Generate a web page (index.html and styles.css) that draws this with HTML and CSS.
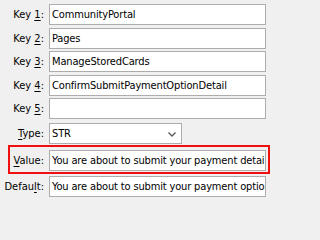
FILE: index.html
```html
<!DOCTYPE html>
<html>
<head>
<meta charset="utf-8">
<link rel="stylesheet" href="styles.css">
</head>
<body>
<div class="form">
  <div class="row">
    <span class="lbl">Key <u>1</u>:</span>
    <div class="field">CommunityPortal</div>
  </div>
  <div class="row gap3">
    <span class="lbl">Key <u>2</u>:</span>
    <div class="field">Pages</div>
  </div>
  <div class="row gap2">
    <span class="lbl">Key <u>3</u>:</span>
    <div class="field">ManageStoredCards</div>
  </div>
  <div class="row gap3">
    <span class="lbl">Key <u>4</u>:</span>
    <div class="field">ConfirmSubmitPaymentOptionDetail</div>
  </div>
  <div class="row gap2">
    <span class="lbl">Key <u>5</u>:</span>
    <div class="field"></div>
  </div>
  <div class="row gap4">
    <span class="lbl"><u>T</u>ype:</span>
    <div class="combo">
      <span class="combo-text">STR</span>
      <svg class="chev" width="8" height="5" viewBox="0 0 8 5"><path d="M0.5 0.5 L4 4 L7.5 0.5" fill="none" stroke="#5a5a5a" stroke-width="1.4"/></svg>
    </div>
  </div>
  <div class="row gap6 highlighted">
    <span class="lbl"><u>V</u>alue:</span>
    <div class="field">You are about to submit your payment details</div>
  </div>
  <div class="row gap5">
    <span class="lbl">Defau<u>l</u>t:</span>
    <div class="field">You are about to submit your payment options</div>
  </div>
</div>
</body>
</html>
```

FILE: styles.css
```css
html, body {
  margin: 0;
  padding: 0;
  background: #f0f0f0;
}
body {
  width: 271px;
  height: 202px;
  overflow: hidden;
  font-family: "DejaVu Sans Condensed", "DejaVu Sans", sans-serif;
  font-stretch: condensed;
  font-size: 11px;
  color: #000;
}
.form {
  display: flex;
  flex-direction: column;
  padding-top: 4px;
}
.row {
  display: grid;
  grid-template-columns: 44px 217px;
  column-gap: 5px;
  align-items: center;
  height: 21px;
}
.gap2 { margin-top: 2px; }
.gap3 { margin-top: 3px; }
.gap4 { margin-top: 4px; }
.gap5 { margin-top: 5px; }
.gap6 { margin-top: 6px; }
.lbl {
  text-align: right;
  white-space: nowrap;
}
.lbl u {
  text-decoration-thickness: 1px;
  text-underline-offset: 2px;
}
.field {
  box-sizing: border-box;
  height: 21px;
  border: 1px solid #adadad;
  background: #fff;
  padding: 0 2px;
  line-height: 19px;
  white-space: nowrap;
  overflow: hidden;
  letter-spacing: -0.15px;
  color: #000;
}
.combo {
  box-sizing: border-box;
  width: 133px;
  height: 21px;
  border: 1px solid #adadad;
  background: #fff;
  display: flex;
  align-items: center;
  justify-content: space-between;
  padding: 0 5px 0 2px;
  letter-spacing: -0.15px;
}
.chev {
  display: block;
  margin-top: 1px;
}
.highlighted {
  position: relative;
}
.highlighted::after {
  content: "";
  position: absolute;
  left: 8px;
  right: 1px;
  top: -5px;
  bottom: -3px;
  border: 2px solid #f01010;
  pointer-events: none;
}
```
